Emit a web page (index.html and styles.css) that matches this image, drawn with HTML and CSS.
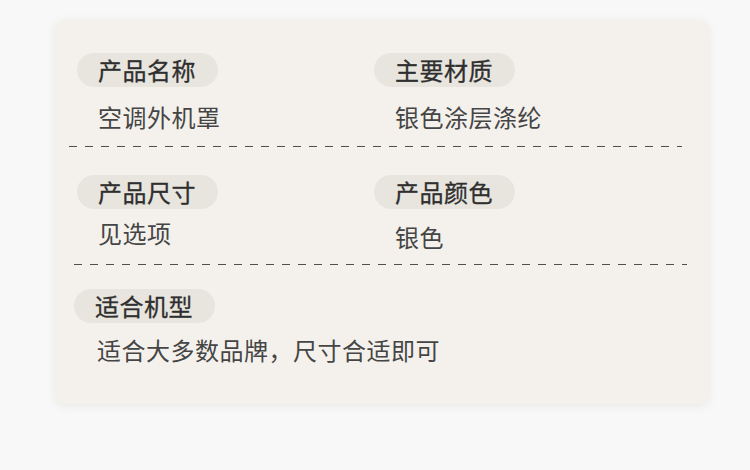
FILE: index.html
```html
<!DOCTYPE html>
<html lang="zh-CN">
<head>
<meta charset="utf-8">
<link rel="stylesheet" href="styles.css">
</head>
<body>
<div class="card">
  <div class="row row-1">
    <div class="cell">
      <div class="pill">产品名称</div>
      <div class="value">空调外机罩</div>
    </div>
    <div class="cell">
      <div class="pill">主要材质</div>
      <div class="value">银色涂层涤纶</div>
    </div>
  </div>
  <div class="dash dash-1"></div>
  <div class="row row-2">
    <div class="cell">
      <div class="pill">产品尺寸</div>
      <div class="value">见选项</div>
    </div>
    <div class="cell">
      <div class="pill">产品颜色</div>
      <div class="value value-low">银色</div>
    </div>
  </div>
  <div class="dash dash-2"></div>
  <div class="row row-3">
    <div class="cell">
      <div class="pill">适合机型</div>
      <div class="value">适合大多数品牌，尺寸合适即可</div>
    </div>
  </div>
</div>
</body>
</html>
```

FILE: styles.css
```css
html, body {
  margin: 0;
  padding: 0;
  background: #f8f8f8;
}
body {
  width: 750px;
  height: 470px;
  font-family: "Noto Sans CJK SC", "Noto Sans", sans-serif;
  color: #3f3f3f;
}
.card {
  margin: 20px 0 0 55px;
  width: 654px;
  height: 384px;
  box-sizing: border-box;
  background: #f4f1ec;
  border-radius: 9px;
  box-shadow: 0 2px 10px rgba(120, 125, 140, 0.12);
  padding: 33px 0 0 0;
  display: flex;
  flex-direction: column;
}
.card > * {
  flex-shrink: 0;
}
.row {
  display: grid;
  grid-template-columns: 297px 1fr;
  padding-left: 22px;
}
.cell {
  display: flex;
  flex-direction: column;
  align-items: flex-start;
}
.pill {
  height: 34px;
  line-height: 34px;
  padding: 0 22px 0 21px;
  border-radius: 17px;
  background: #e8e5de;
  font-size: 24px;
  font-weight: 400;
  color: #2f2f2f;
  letter-spacing: 0.5px;
  -webkit-text-stroke: 0.3px #2f2f2f;
}
.value {
  font-size: 24px;
  line-height: 32px;
  padding-left: 21px;
  color: #454545;
  letter-spacing: 0.5px;
  white-space: nowrap;
}
.row-1 .value { margin-top: 14px; }
.row-2 { margin-top: 28px; }
.row-2 .value { margin-top: 8px; }
.row-2 .value-low { margin-top: 12px; }
.row-3 {
  margin-top: 24px;
  padding-left: 19px;
  grid-template-columns: 1fr;
}
.row-3 .value { margin-top: 11px; padding-left: 23px; }
.dash {
  height: 1px;
  width: 613px;
  background: repeating-linear-gradient(to right, #4f4f4f 0 8px, transparent 8px 16px);
}
.dash-1 { margin: 13px 0 0 14px; }
.dash-2 { margin: 11px 0 0 19px; }
```
